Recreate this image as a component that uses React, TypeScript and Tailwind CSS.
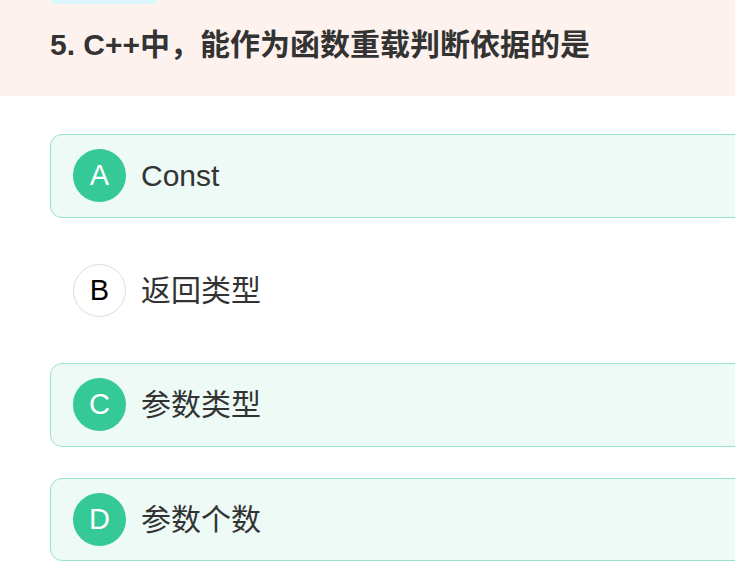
import React from "react";

const font = { fontFamily: '"Liberation Sans", "Noto Sans CJK SC", sans-serif' };

type Opt = { letter: string; text: string; selected: boolean };

const options: Opt[] = [
  { letter: "A", text: "Const", selected: true },
  { letter: "B", text: "返回类型", selected: false },
  { letter: "C", text: "参数类型", selected: true },
  { letter: "D", text: "参数个数", selected: true },
];

export default function App() {
  return (
    <div className="w-[735px] h-[561px] overflow-hidden bg-white" style={font}>
      <div className="h-[96px] bg-[#fef2ee] pl-[50px] flex flex-col">
        <div className="ml-[1px] w-[106px] h-[4px] rounded-b-[4px] bg-[#d9f7fc]" />
        <div className="mt-[26px] text-[30px] leading-[30px] font-bold text-[#333333] whitespace-nowrap">
          5. C++中，能作为函数重载判断依据的是
        </div>
      </div>
      <div className="pl-[50px] pt-[38px] flex flex-col gap-[31px]">
        {options.map((o) => (
          <div
            key={o.letter}
            className={
              "w-[760px] h-[83.5px] shrink-0 rounded-[12px] border flex items-center pl-[22px] gap-[15px] " +
              (o.selected ? "border-[#97e5c9] bg-[#edfaf6]" : "border-transparent bg-white")
            }
          >
            <div
              className={
                "w-[53px] h-[53px] rounded-full flex items-center justify-center text-[29px] " +
                (o.selected ? "bg-[#34c997] text-white" : "bg-white border border-[#dddddd] text-black")
              }
            >
              {o.letter}
            </div>
            <div className="text-[30px] text-[#333333] whitespace-nowrap">{o.text}</div>
          </div>
        ))}
      </div>
    </div>
  );
}
